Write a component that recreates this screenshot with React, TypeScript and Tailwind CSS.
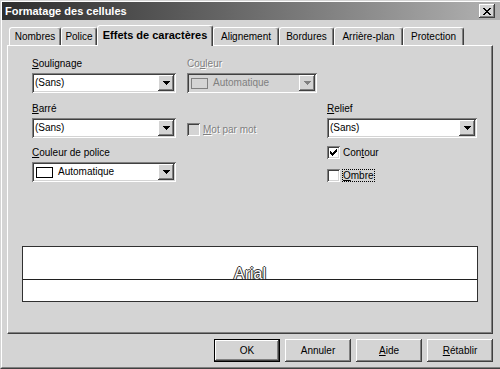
import React from "react";

const raised =
  "shadow-[inset_-1px_-1px_0_#404040,inset_1px_1px_0_#ffffff,inset_-2px_-2px_0_#808080,inset_2px_2px_0_#d4d4d4]";
const sunken =
  "shadow-[inset_1px_1px_0_#808080,inset_-1px_-1px_0_#ffffff,inset_2px_2px_0_#404040,inset_-2px_-2px_0_#d4d4d4]";

function U({ children }: { children: React.ReactNode }) {
  return <span className="underline underline-offset-[1px]">{children}</span>;
}

function Arrow({ disabled }: { disabled?: boolean }) {
  return (
    <svg width="7" height="4" viewBox="0 0 7 4" shapeRendering="crispEdges">
      <path
        d="M0 0h7v1h-1v1h-1v1h-1v1h-1v-1h-1v-1h-1v-1h-1z"
        fill={disabled ? "#808080" : "#000"}
      />
    </svg>
  );
}

function Select({
  className,
  disabled,
  children,
}: {
  className: string;
  disabled?: boolean;
  children: React.ReactNode;
}) {
  return (
    <div
      className={`h-[20px] p-[2px] flex items-center ${sunken} ${
        disabled ? "bg-[#d4d4d4] text-[#808080]" : "bg-white"
      } ${className}`}
    >
      <div className="flex-1 flex items-center pl-px whitespace-nowrap overflow-hidden">{children}</div>
      <div className={`w-[16px] h-[16px] bg-[#d4d4d4] ${raised} flex items-center justify-center`}>
        <Arrow disabled={disabled} />
      </div>
    </div>
  );
}

function ColorValue({ disabled }: { disabled?: boolean }) {
  return (
    <div className="flex items-center pl-px">
      <div
        className={`w-[17px] h-[11px] border ${
          disabled ? "border-[#808080] bg-[#d4d4d4]" : "border-black bg-white"
        }`}
      />
      <span className="ml-[5px]">Automatique</span>
    </div>
  );
}

function Check() {
  return (
    <svg width="7" height="7" viewBox="0 0 7 7" shapeRendering="crispEdges">
      <path
        d="M6 0h1v1h-1zM5 1h2v1h-2zM0 2h1v1h-1zM4 2h3v1h-3zM0 3h2v1h-2zM3 3h3v1h-3zM0 4h5v1h-5zM1 5h3v1h-3zM2 6h1v1h-1z"
        fill="#000"
      />
    </svg>
  );
}

function CheckBox({
  checked,
  disabled,
  focus,
  children,
}: {
  checked?: boolean;
  disabled?: boolean;
  focus?: boolean;
  children: React.ReactNode;
}) {
  return (
    <div className="flex items-center gap-[2px] h-[13px]">
      <div
        className={`w-[13px] h-[13px] shrink-0 flex items-center justify-center ${sunken} ${
          disabled ? "bg-[#d4d4d4]" : "bg-white"
        }`}
      >
        {checked && <Check />}
      </div>
      <span
        className={`border border-dotted leading-[11px] whitespace-nowrap ${
          focus ? "border-black" : "border-transparent"
        } ${disabled ? "text-[#808080] [text-shadow:1px_1px_0_#ffffff]" : ""}`}
      >
        {children}
      </span>
    </div>
  );
}

function Tab({
  w,
  selected,
  children,
}: {
  w: string;
  selected?: boolean;
  children: React.ReactNode;
}) {
  if (selected) {
    return (
      <div
        className={`${w} h-[21px] -mb-px relative z-10 bg-[#d4d4d4] border-t border-l border-r border-t-white border-l-white border-r-[#404040] rounded-tl-[3px] rounded-tr-[3px] shadow-[inset_-1px_0_0_#808080] pt-[3px] text-center font-bold text-[11px] whitespace-nowrap`}
      >
        {children}
      </div>
    );
  }
  return (
    <div
      className={`${w} h-[18px] border-t border-l border-r border-t-white border-l-white border-r-[#404040] rounded-tl-[3px] rounded-tr-[3px] shadow-[inset_-1px_0_0_#808080] pt-[3px] text-center whitespace-nowrap`}
    >
      {children}
    </div>
  );
}

function Button({
  def,
  children,
}: {
  def?: boolean;
  children: React.ReactNode;
}) {
  if (def) {
    return (
      <div className="w-[66px] h-[23px] border border-black flex">
        <div className={`flex-1 ${raised} flex items-center justify-center`}>{children}</div>
      </div>
    );
  }
  return (
    <div className={`w-[66px] h-[23px] ${raised} flex items-center justify-center`}>{children}</div>
  );
}

export default function App() {
  return (
    <div className="w-[500px] h-[369px] bg-[#d4d4d4] font-['Liberation_Sans',Arial,sans-serif] text-[10px] leading-[12px] text-black overflow-hidden select-none">
      <div className="h-full border-t border-l border-b border-t-[#d4d4d4] border-l-[#d4d4d4] border-b-[#404040]">
        <div className="h-full flex flex-col border-t border-l border-b border-t-white border-l-white border-b-[#808080]">
          {/* Title bar */}
          <div className="h-[18px] shrink-0 flex items-center bg-linear-to-r from-[#2e2e2e] to-[#b2b2b2] pl-[3px] pr-[5px]">
            <span className="flex-1 text-white font-bold text-[11px] leading-[13px]">
              Formatage des cellules
            </span>
            <div className={`w-[16px] h-[14px] bg-[#d4d4d4] ${raised} flex items-center justify-center`}>
              <svg width="8" height="7" viewBox="0 0 8 7" shapeRendering="crispEdges">
                <path
                  d="M0 0h2v1h-2zM6 0h2v1h-2zM1 1h2v1h-2zM5 1h2v1h-2zM2 2h4v1h-4zM3 3h2v1h-2zM2 4h4v1h-4zM1 5h2v1h-2zM5 5h2v1h-2zM0 6h2v1h-2zM6 6h2v1h-2z"
                  fill="#000"
                />
              </svg>
            </div>
          </div>

          {/* Tabs */}
          <div className="h-[20px] mt-[5px] shrink-0 flex items-end pl-[7px]">
            <Tab w="w-[52px]">Nombres</Tab>
            <Tab w="w-[36px]">Police</Tab>
            <Tab w="w-[116px]" selected>
              Effets de caractères
            </Tab>
            <Tab w="w-[66px]">Alignement</Tab>
            <Tab w="w-[55px]">Bordures</Tab>
            <Tab w="w-[69px]">Arrière-plan</Tab>
            <Tab w="w-[61px]">Protection</Tab>
          </div>

          {/* Panel */}
          <div className="ml-[5px] w-[486px] h-[289px] shrink-0 border-t border-l border-r border-b border-t-white border-l-white border-r-[#404040] border-b-[#404040] shadow-[inset_-1px_-1px_0_#808080] pt-[12px]">
            <div className="pl-[24px] flex flex-col">
              {/* Row 1 */}
              <div className="flex">
                <div className="w-[144px] flex flex-col">
                  <div className="h-[12px]">
                    <U>S</U>oulignage
                  </div>
                  <Select className="mt-[3px] w-[144px]">(Sans)</Select>
                </div>
                <div className="ml-[11px] w-[130px] flex flex-col">
                  <div className="h-[12px] text-[#808080] [text-shadow:1px_1px_0_#ffffff]">
                    Co<U>u</U>leur
                  </div>
                  <Select className="mt-[3px] w-[130px]" disabled>
                    <ColorValue disabled />
                  </Select>
                </div>
              </div>

              {/* Row 2 */}
              <div className="flex mt-[10px]">
                <div className="w-[144px] flex flex-col">
                  <div className="h-[12px]">
                    <U>B</U>arré
                  </div>
                  <Select className="mt-[3px] w-[144px]">(Sans)</Select>
                </div>
                <div className="ml-[11px] w-[130px] pt-[20px]">
                  <CheckBox disabled>
                    <U>M</U>ot par mot
                  </CheckBox>
                </div>
                <div className="ml-[10px] w-[150px] flex flex-col">
                  <div className="h-[12px]">
                    <U>R</U>elief
                  </div>
                  <Select className="mt-[3px] w-[150px]">(Sans)</Select>
                </div>
              </div>

              {/* Row 3 */}
              <div className="flex mt-[9px]">
                <div className="w-[144px] flex flex-col">
                  <div className="h-[12px]">
                    <U>C</U>ouleur de police
                  </div>
                  <Select className="mt-[3px] w-[144px]">
                    <ColorValue />
                  </Select>
                </div>
                <div className="ml-[11px] w-[130px]" />
                <div className="ml-[10px] w-[150px] -mt-px flex flex-col gap-[10px]">
                  <CheckBox checked>
                    Con<U>t</U>our
                  </CheckBox>
                  <CheckBox focus>
                    <U>O</U>mbre
                  </CheckBox>
                </div>
              </div>
            </div>

            {/* Preview */}
            <div className="ml-[14px] mt-[64px] w-[456px] h-[56px] border border-[#303030] bg-white flex flex-col">
              <div className="h-[33px] border-b border-[#202020] flex items-end justify-center">
                <span className="text-[16px] leading-[16px] -mb-[3px] text-white font-['Liberation_Sans',Arial,sans-serif] [text-shadow:1px_0_0_#333,-1px_0_0_#333,0_1px_0_#333,0_-1px_0_#333]">
                  Arial
                </span>
              </div>
              <div className="flex-1" />
            </div>
          </div>

          {/* Buttons */}
          <div className="mt-[5px] flex justify-end gap-[5px] pr-[7px]">
            <Button def>OK</Button>
            <Button>Annuler</Button>
            <Button>
              <U>A</U>ide
            </Button>
            <Button>
              <U>R</U>établir
            </Button>
          </div>
        </div>
      </div>
    </div>
  );
}
